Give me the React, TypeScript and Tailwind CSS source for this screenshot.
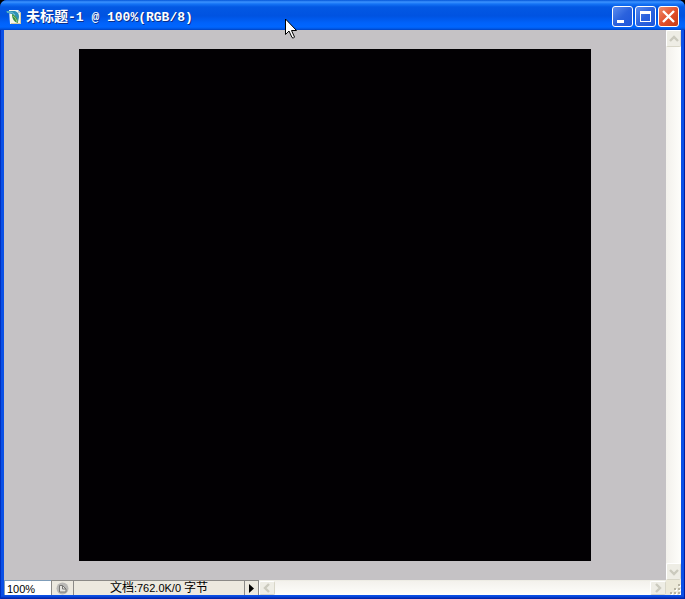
import { useState } from 'react';
import type { ReactNode } from 'react';

const CAPTION_BUTTON =
  'flex h-[21px] w-[21px] items-center justify-center rounded-[3px] border border-white';
const SCROLL_BUTTON =
  'flex shrink-0 items-center justify-center rounded-[2px] border border-white border-r-[#d8d6c8] border-b-[#d8d6c8] bg-[#eeede5]';

function DocumentIcon() {
  return (
    <svg width="16" height="16" viewBox="0 0 16 16" aria-hidden="true">
      <path d="M3 1h9l3 3v11H4z" fill="#f4f7ee" />
      <path d="M12 1l3 3h-3z" fill="#b9c7cf" />
      <path d="M14 4h1v11H5v-1h9z" fill="#d5c9a0" />
      <path d="M0 2h9c3 1 4 3 4 6l-1 5C11 9 9 6 6 5L1 4z" fill="#2d91b5" />
      <path d="M1 3c3 0 6 0 8 3" stroke="#7cc6df" fill="none" />
      <path d="M6 5c3 1 6 4 6 9-4-1-6-4-6-9z" fill="#398f43" />
      <path d="M7 7c2 1 3 3 4 6" stroke="#9acb7c" fill="none" />
    </svg>
  );
}

function CaptionButton({ label, close, children }: { label: string; close?: boolean; children: ReactNode }) {
  return (
    <button
      aria-label={label}
      className={`${CAPTION_BUTTON} ${
        close
          ? 'bg-linear-to-br from-[#ee8a68] via-[#e2502c] to-[#c63a12]'
          : 'bg-linear-to-br from-[#5c8cee] via-[#2b62dd] to-[#1c56dc]'
      }`}
    >
      <svg width="19" height="19" viewBox="0 0 19 19" shapeRendering="crispEdges" aria-hidden="true">
        {children}
      </svg>
    </button>
  );
}

function TitleBar() {
  return (
    <header className="flex h-[30px] shrink-0 items-center rounded-t-[7px] bg-[linear-gradient(to_bottom,#0355d8_0,#3c93ff_2px,#1473f5_4px,#0358e3_7px,#0053e1_16px,#0062fb_23px,#0066ff_27px,#0054e0_29px,#0040bd_30px)] pt-[3px] pr-[6px] pl-[6px]">
      <DocumentIcon />
      <h1 className="ml-1 flex-1 truncate pt-[2px] font-['Liberation_Mono','Noto_Sans_CJK_SC',monospace] text-[13px] leading-5 font-bold text-white [text-shadow:1px_1px_#0b2f8a]">
        <span className="text-[14px]">未标题</span>-1 @ 100%(RGB/8)
      </h1>
      <div className="flex gap-[2px]">
        <CaptionButton label="Minimize">
          <path d="M4 13h7v3H4z" fill="#fff" />
        </CaptionButton>
        <CaptionButton label="Maximize">
          <path d="M4 4h11v11H4zM5 7v7h9V7z" fill="#fff" fillRule="evenodd" />
        </CaptionButton>
        <CaptionButton label="Close" close>
          <path d="M4 4l11 11M15 4L4 15" stroke="#fff" strokeWidth="2.400" shapeRendering="auto" />
        </CaptionButton>
      </div>
    </header>
  );
}

function Chevron({ d }: { d: string }) {
  return (
    <svg width="10" height="10" viewBox="0 0 10 10" fill="none" aria-hidden="true">
      <path d={d} stroke="#cbcabe" strokeWidth="2.400" />
    </svg>
  );
}

function StatusBar() {
  const [zoom, setZoom] = useState('100%');

  return (
    <footer className="flex h-[15px] shrink-0 bg-[#ece9d8] font-['Liberation_Sans','Noto_Sans_CJK_SC',sans-serif] text-[11px] text-black">
      <input
        aria-label="Zoom"
        value={zoom}
        onChange={(e) => setZoom(e.target.value)}
        className="w-[47px] border-t border-l border-[#7f9db9] bg-white pt-[2px] pl-[2px] leading-3 outline-none"
      />
      <button
        aria-label="Version Cue"
        className="flex w-[23px] items-center justify-center border-x border-t border-[#8b8a87] bg-[#ece9df]"
      >
        <svg width="13" height="13" viewBox="0 0 13 13" aria-hidden="true">
          <circle cx="6.5" cy="6.5" r="6" fill="#b9b8b5" />
          <path d="M3.5 3.500h3l3.500 3.500v3H3.500z" fill="#e5e4df" stroke="#777673" />
          <path d="M6.5 3.500V7H10" fill="none" stroke="#777673" />
        </svg>
      </button>
      <p className="w-[170px] border-t border-[#8b8a87] bg-[#ece9df] text-center leading-[14px] whitespace-nowrap">
        <span className="text-[12px]">文档</span>:762.0K/0 <span className="text-[12px]">字节</span>
      </p>
      <button
        aria-label="Status options"
        className="flex w-[15px] items-center justify-center border-x border-t border-[#8b8a87] bg-[#ece9df]"
      >
        <svg width="5" height="9" viewBox="0 0 5 9" aria-hidden="true">
          <path d="M0 0l5 4.5L0 9z" />
        </svg>
      </button>
      <div className="flex flex-1 justify-between border-t border-[#eeede5] bg-linear-to-b from-[#f3f1ec] to-[#fefefb]">
        <button aria-label="Scroll left" className={`${SCROLL_BUTTON} w-4`}>
          <Chevron d="M7 1L3 5l4 4" />
        </button>
        <button aria-label="Scroll right" className={`${SCROLL_BUTTON} w-4`}>
          <Chevron d="M3 1l4 4-4 4" />
        </button>
      </div>
      <div className="flex w-[15px] items-end justify-end">
        <svg width="11" height="11" viewBox="0 0 11 11" shapeRendering="crispEdges" aria-hidden="true">
          <path d="M9 1h2v2H9zM5 5h2v2H5zM9 5h2v2H9zM1 9h2v2H1zM5 9h2v2H5zM9 9h2v2H9z" fill="#fff" />
          <path d="M8 0h2v2H8zM4 4h2v2H4zM8 4h2v2H8zM0 8h2v2H0zM4 8h2v2H4zM8 8h2v2H8z" fill="#b8b4a3" />
        </svg>
      </div>
    </footer>
  );
}

function Pointer() {
  return (
    <svg
      className="pointer-events-none absolute top-[18px] left-[285px]"
      width="13"
      height="22"
      viewBox="0 0 13 22"
      aria-hidden="true"
    >
      <path
        d="M.5 1v15.500l3.500-3.500 3 6.500q1.500 1.500 2.500-.5l-3-6.500h5z"
        fill="#fff"
        stroke="#000"
      />
    </svg>
  );
}

export default function App() {
  return (
    <div className="relative h-screen bg-black">
      <div className="flex h-full flex-col rounded-t-[7px] bg-[#0041d5]">
        <TitleBar />
        <div className="flex min-h-0 flex-1 flex-col bg-[linear-gradient(to_bottom,#0a50e6_0,#0a50e6_calc(100%-3px),#001ea0_100%)] px-1 pb-1 shadow-[inset_1px_0_#0030c0,inset_-1px_0_#001ea0]">
          <div className="flex min-h-0 flex-1">
            <main className="flex min-w-0 flex-1 items-center justify-center overflow-hidden bg-[#c5c2c5]">
              <div className="aspect-square w-[512px] bg-[#020003]" />
            </main>
            <div className="flex w-[15px] shrink-0 flex-col justify-between bg-linear-to-r from-[#f3f1ec] to-[#fefefb]">
              <button aria-label="Scroll up" className={`${SCROLL_BUTTON} h-[17px]`}>
                <Chevron d="M1 7l4-4 4 4" />
              </button>
              <button aria-label="Scroll down" className={`${SCROLL_BUTTON} h-[17px]`}>
                <Chevron d="M1 3l4 4 4-4" />
              </button>
            </div>
          </div>
          <StatusBar />
        </div>
      </div>
      <Pointer />
    </div>
  );
}
